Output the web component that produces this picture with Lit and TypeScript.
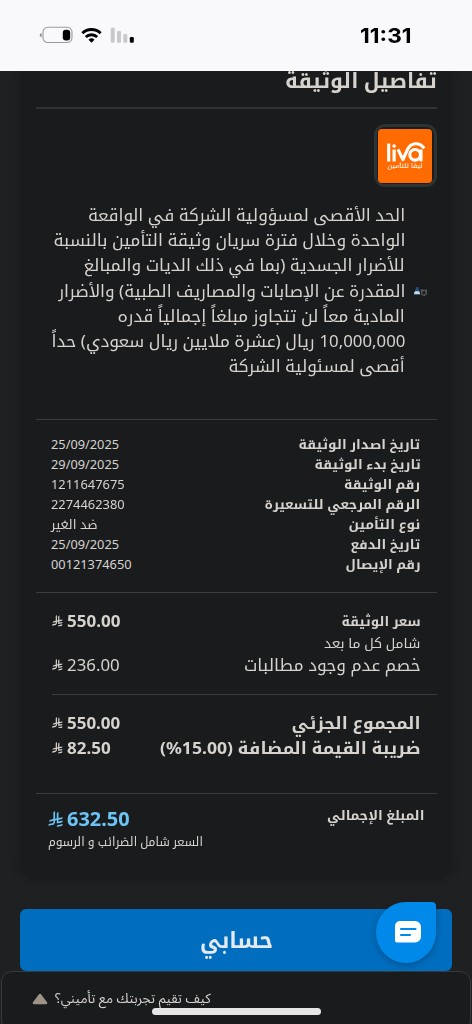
import { LitElement, html, css, svg } from "lit";
import { customElement, property, query } from "lit/decorators.js";

/** A single line of text set to an exact measure. */
@customElement("fit-text")
class FitText extends LitElement {
  @property({ type: Number }) w = 0;
  @query("span") span!: HTMLSpanElement;

  static styles = css`
    :host { display: block; white-space: nowrap; flex: none; }
    span { display: inline-block; transform-origin: right center; }
    :host([dir="ltr"]) span { transform-origin: left center; }
  `;

  updated() {
    this.style.width = `${this.w}px`;
    const natural = this.span.offsetWidth;
    if (natural) this.span.style.transform = `scaleX(${this.w / natural})`;
  }

  render() {
    return html`<span><slot @slotchange=${() => this.requestUpdate()}></slot></span>`;
  }
}

const riyal = svg`
  <path d="M699.62,1113.02h0c-20.06,44.48-33.32,92.75-38.4,143.37l424.51-90.24c20.06-44.47,33.31-92.75,38.4-143.37l-424.51,90.24Z"/>
  <path d="M1085.73,895.8c20.06-44.47,33.32-92.75,38.4-143.37l-330.68,70.33v-135.2l292.27-62.11c20.06-44.47,33.32-92.75,38.4-143.37l-330.68,70.27V66.13c-50.67,28.45-95.67,66.32-132.25,110.99v403.35l-132.25,28.11V0c-50.67,28.44-95.67,66.32-132.25,110.99v525.69l-295.91,62.88c-20.06,44.47-33.33,92.75-38.42,143.37l334.33-71.05v170.26l-358.3,76.14c-20.06,44.47-33.32,92.75-38.4,143.37l375.04-79.7c30.53-6.35,56.77-24.4,73.83-49.24l68.78-101.97v-.02c7.14-10.55,11.3-23.27,11.3-36.97v-149.98l132.25-28.11v270.4l424.53-90.28Z"/>`;

type Run = [string, number];

const terms: Run[][] = [
  [["الحد الأقصى لمسؤولية الشركة في الواقعة", 317]],
  [["الواحدة وخلال فترة سريان وثيقة التأمين بالنسبة", 351.5]],
  [["للأضرار الجسدية (بما في ذلك الديات والمبالغ", 321.5]],
  [["المقدرة عن الإصابات والمصاريف الطبية) والأضرار", 347.5]],
  [["المادية معاً لن تتجاوز مبلغاً إجمالياً قدره", 287.5]],
  [["10,000,000", 85.5], ["ريال (عشرة ملايين ريال سعودي) حداً", 263.5]],
  [["أقصى لمسئولية الشركة", 176.5]],
];

const details: [string, number, string, number][] = [
  ["تاريخ اصدار الوثيقة", 121.5, "25/09/2025", 68],
  ["تاريخ بدء الوثيقة", 106.5, "29/09/2025", 68],
  ["رقم الوثيقة", 76, "1211647675", 73.5],
  ["الرقم المرجعي للتسعيرة", 155.5, "2274462380", 73.5],
  ["نوع التأمين", 71.5, "ضد الغير", 47],
  ["تاريخ الدفع", 69.5, "25/09/2025", 68],
  ["رقم الإيصال", 75.5, "00121374650", 81],
];

@customElement("app-root")
class AppRoot extends LitElement {
  static styles = css`
    :host {
      display: block;
      width: 472px;
      height: 1024px;
      overflow: hidden;
      background: #1e2021;
      color: #d6d3cf;
      font-family: "Noto Sans", "Noto Kufi Arabic", "DejaVu Sans", sans-serif;
    }
    * { box-sizing: border-box; }
    svg { display: block; flex: none; }
    .status {
      height: 71px;
      background: #f9f9fb;
      display: flex;
      justify-content: space-between;
      align-items: flex-start;
      padding: 26px 60.5px 0 39px;
    }
    .clock {
      font: 700 20.5px/20px Inter, sans-serif;
      color: #000;
    }
    .card {
      height: 809px;
      margin: 0 20px;
      padding: 0 15.5px;
      background: #1a1b1d;
      border-radius: 0 0 16px 16px;
      box-shadow: 0 0 10px #1a1b1d;
      clip-path: inset(0 -20px -20px -20px);
    }
    .title { height: 36px; font-size: 21px; line-height: 18px; font-weight: 700; }
    .rule { height: 1px; background: #3a3d3f; }
    .rule.top { height: 2px; background: #303335; }
    .rule.short { margin-right: 0; margin-left: 16px; }
    .logo {
      width: 63px;
      height: 63px;
      margin-top: 15px;
      border: 3px solid #2d3235;
      border-radius: 11px;
      padding: 1.5px;
    }
    .terms {
      display: flex;
      align-items: flex-start;
      gap: 8px;
      padding: 15px 8.5px 0 0;
      height: 232px;
    }
    .bullet { margin-top: 84px; }
    .lines { font-size: 16.5px; line-height: 25.2px; }
    .line { display: flex; gap: 5px; }
    .details {
      height: 172px;
      padding: 13.5px 16px 0 15.5px;
      font-size: 12.8px;
      line-height: 20px;
    }
    .row { display: flex; justify-content: space-between; align-items: center; }
    .label, .strong { font-weight: 700; }
    .prices { height: 101px; padding: 16px 16px 0 16.5px; font-size: 16.7px; line-height: 24px; }
    .small { font-size: 13.3px; }
    .incl { line-height: 21px; height: 20px; }
    .sums { height: 98px; padding: 15px 16px 0 16.5px; font-size: 16.8px; line-height: 25.4px; }
    .amount { display: flex; align-items: center; gap: 4px; fill: currentColor; }
    .total { display: flex; justify-content: space-between; padding: 10px 12.5px 0 12px; }
    .total-label { font-size: 13.4px; line-height: 22px; font-weight: 700; }
    .grand { font-size: 19.8px; line-height: 30px; font-weight: 700; color: #6cc4f5; }
    .note { font-size: 12.5px; line-height: 16px; }
    .cta {
      height: 62px;
      margin: 29px 20px 0;
      border-radius: 6px;
      background: #006dbe;
      display: flex;
      justify-content: center;
      font-size: 23px;
      line-height: 60px;
      font-weight: 700;
      color: #e4eaf0;
    }
    .survey {
      height: 60px;
      border: 1px solid #37393b;
      border-radius: 11px;
      margin: 0 1px;
      background: #1a1b1d;
      display: flex;
      align-items: flex-start;
      justify-content: flex-start;
      gap: 7px;
      padding: 15px 0 0 30px;
      font-size: 13.5px;
      line-height: 22px;
      font-family: "Noto Sans", "Noto Sans Arabic", sans-serif;
    }
    .survey svg { margin-top: 6px; }
    .chat { position: absolute; left: 366px; top: 895px; }
    .home {
      position: absolute;
      left: 152px;
      top: 1008px;
      width: 169px;
      height: 6.5px;
      border-radius: 4px;
      background: #e6e6e6;
    }
  `;

  amount(value: string, w: number, strong = true) {
    return html`<div class="amount ${strong ? "strong" : ""}" dir="ltr">
      <svg width="10.5" height="11.5" viewBox="0 0 1124.14 1256.39">${riyal}</svg>
      <fit-text dir="ltr" .w=${w}>${value}</fit-text>
    </div>`;
  }

  render() {
    return html`
      <div class="status">
        <svg width="97" height="18" viewBox="39 26 97 18">
          <rect x="43" y="27.3" width="29" height="15.2" rx="4.8" fill="none" stroke="#9b9b9d" stroke-width="1.1"/>
          <path d="M41.6 33v4.3q-1.8-.6-1.8-2.15T41.6 33z" fill="#8b8b8d"/>
          <rect x="62.8" y="29.7" width="7.4" height="10.8" rx="3" fill="#000"/>
          <g fill="none" stroke="#000" stroke-width="2.9">
            <path d="M82.4 33.2a13.1 13.1 0 0 1 18.2 0"/>
            <path d="M85.8 37a8.2 8.2 0 0 1 11.4 0"/>
          </g>
          <path d="M91.5 42.7l-3-3a4.4 4.4 0 0 1 6 0z" fill="#000"/>
          <g fill="#c9c9cb">
            <rect x="110.7" y="27.5" width="4" height="15.3" rx="1.3"/>
            <rect x="117" y="31" width="4" height="11.8" rx="1.3"/>
            <rect x="123.3" y="34" width="4" height="8.8" rx="1.3"/>
          </g>
          <rect x="129.8" y="37" width="4" height="5.8" rx="1.3" fill="#000"/>
        </svg>
        <fit-text class="clock" dir="ltr" .w=${52}>11:31</fit-text>
      </div>

      <div class="card" dir="rtl">
        <div class="title"><fit-text .w=${152}>تفاصيل الوثيقة</fit-text></div>
        <div class="rule top"></div>

        <div class="logo">
          <svg width="54" height="54" viewBox="0 0 54 54">
            <rect width="54" height="54" rx="4" fill="#ff6b00"/>
            <g fill="none" stroke="#fff" stroke-width="3.1">
              <path d="M10.7 14.5V32.4M16.1 20.5V32.4"/>
              <path d="M20 20.3L24.9 30.6L29.5 20.5C32.5 13.8 41 12.3 46.3 19.2" stroke-linejoin="round"/>
              <circle cx="37.1" cy="25.8" r="5.3"/>
              <path d="M43 20.5V32.4"/>
            </g>
            <circle cx="16.1" cy="17" r="1.8" fill="#fff"/>
            <text x="27" y="39" text-anchor="middle" fill="#fff" font-size="6.2" textLength="35" lengthAdjust="spacingAndGlyphs" direction="rtl">ليڤا للتأمين</text>
          </svg>
        </div>

        <div class="terms">
          <svg class="bullet" width="15" height="11" viewBox="0 0 15 11">
            <path d="M.8 8.2L3.4 1h1.7L7.2 8.2z" fill="#294f7c"/>
            <path d="M.8 8.2l1.1-3h4.3l1 3z" fill="#c4dced"/>
            <circle cx="10.9" cy="6.8" r="2.4" fill="none" stroke="#6a6d6f" stroke-width="1.4" stroke-dasharray="1.6 .7"/>
            <path d="M7.5 4.2h2.4M12.4 4.2h1.6" stroke="#606365" stroke-width="1.2"/>
          </svg>
          <div class="lines">
            ${terms.map((runs) => html`<div class="line">
              ${runs.map(([t, w]) => html`<fit-text .w=${w}>${t}</fit-text>`)}
            </div>`)}
          </div>
        </div>

        <div class="rule"></div>
        <div class="details">
          ${details.map(([k, kw, v, vw]) => html`
            <div class="row">
              <fit-text class="label" .w=${kw}>${k}</fit-text>
              <fit-text dir="ltr" .w=${vw}>${v}</fit-text>
            </div>`)}
        </div>

        <div class="rule"></div>
        <div class="prices">
          <div class="row">
            <fit-text class="label small" .w=${79.5}>سعر الوثيقة</fit-text>
            ${this.amount("550.00", 53)}
          </div>
          <fit-text class="small incl" .w=${96}>شامل كل ما بعد</fit-text>
          <div class="row">
            <fit-text .w=${177}>خصم عدم وجود مطالبات</fit-text>
            ${this.amount("236.00", 52.5, false)}
          </div>
        </div>

        <div class="rule short"></div>
        <div class="sums">
          <div class="row">
            <fit-text class="label" .w=${129.5}>المجموع الجزئي</fit-text>
            ${this.amount("550.00", 53.5)}
          </div>
          <div class="row">
            <fit-text class="label" .w=${261}>ضريبة القيمة المضافة (15.00%)</fit-text>
            ${this.amount("82.50", 43.5)}
          </div>
        </div>

        <div class="rule"></div>
        <div class="total">
          <fit-text class="total-label" .w=${97}>المبلغ الإجمالي</fit-text>
          <div dir="ltr">
            <div class="amount grand">
              <svg width="15" height="16" viewBox="0 0 1124.14 1256.39">${riyal}</svg>
              <fit-text dir="ltr" .w=${62.5}>632.50</fit-text>
            </div>
            <fit-text class="note" dir="ltr" .w=${155}><bdi dir="rtl">السعر شامل الضرائب و الرسوم</bdi></fit-text>
          </div>
        </div>
      </div>

      <div class="cta"><fit-text dir="ltr" .w=${73}>حسابي</fit-text></div>

      <div class="survey">
        <svg width="16" height="12" viewBox="0 0 16 12">
          <path d="M8 2L14 10H2z" fill="#9c9488" stroke="#9c9488" stroke-width="2.6" stroke-linejoin="round"/>
        </svg>
        <fit-text dir="ltr" .w=${155.5}><bdi dir="rtl">كيف تقيم تجربتك مع تأميني؟</bdi></fit-text>
      </div>

      <svg class="chat" width="80" height="80" viewBox="366 895 80 80">
        <path d="M406 902h26a4 4 0 0 1 4 4v26.5a30 30.5 0 1 1-30-30.5z" fill="#0089e8" style="filter: drop-shadow(0 2px 3px rgba(0,0,0,.25))"/>
        <path d="M400 921h15a6 6 0 0 1 6 6v9.5a6 6 0 0 1-6 6h-18a2 2 0 0 1-2-2V926a5 5 0 0 1 5-5z" fill="#fff"/>
        <path d="M401 929h14.5M401 935h9" stroke="#0089e8" stroke-width="2.2" stroke-linecap="round"/>
      </svg>
      <div class="home"></div>
    `;
  }
}
